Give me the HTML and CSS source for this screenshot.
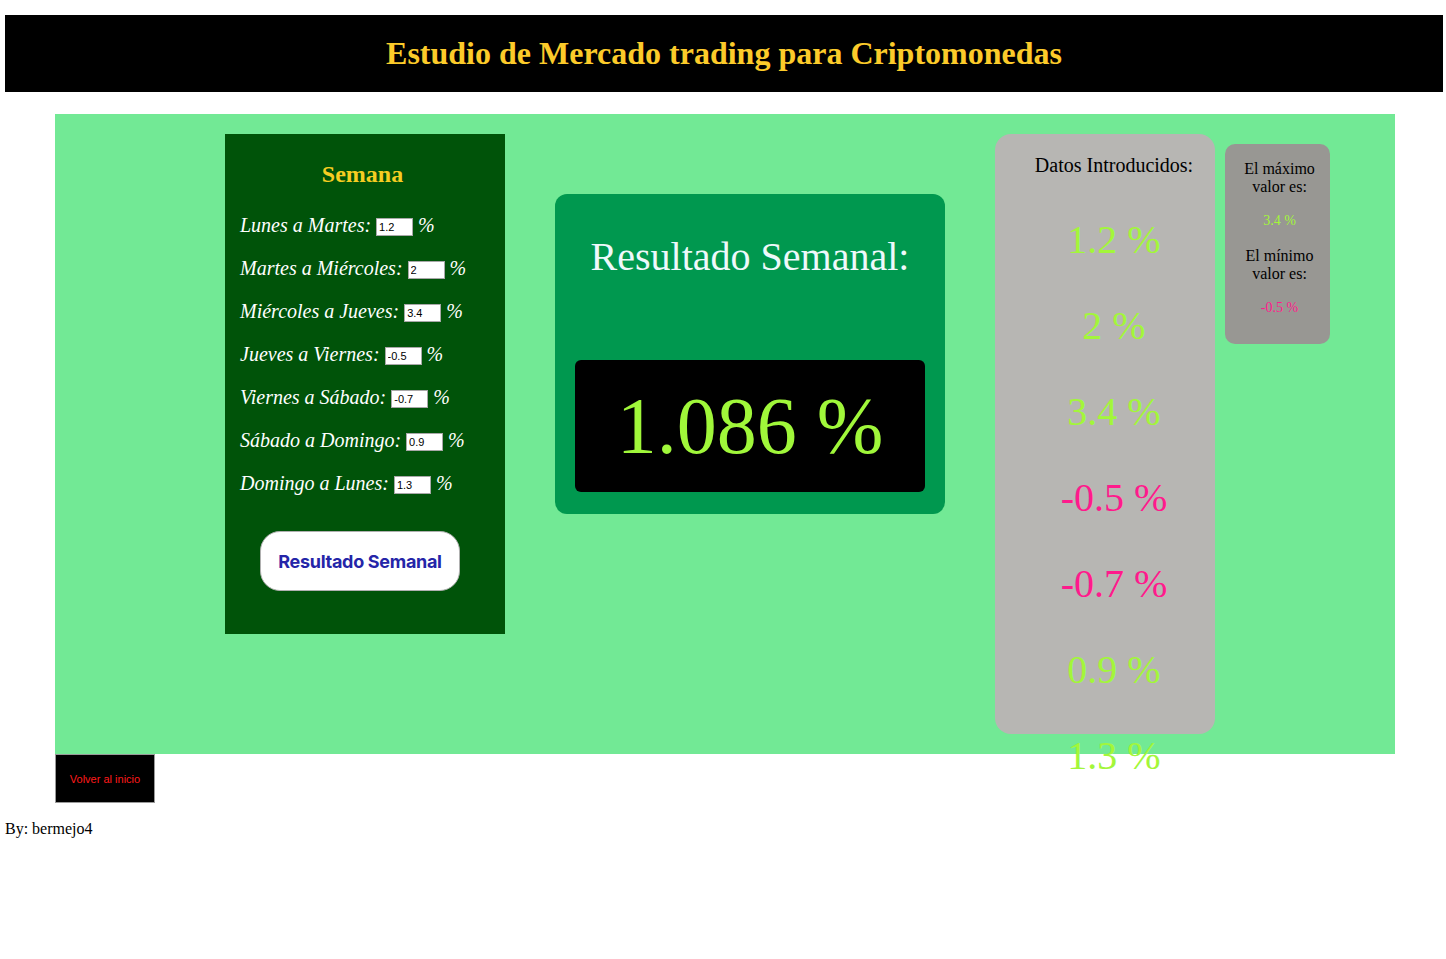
FILE: index.html
```html
<!DOCTYPE html>
<html lang="es">
<head>
<meta charset="utf-8">
<title>Estudio de Mercado</title>
<link rel="stylesheet" href="styles.css">
</head>
<body>
<header class="top">
  <h1 class="top-title">Estudio de Mercado trading para Criptomonedas</h1>
</header>

<main class="stage">
  <section class="week">
    <h2 class="week-title">Semana</h2>
    <div class="row"><span>Lunes a Martes:</span> <input class="num" type="text" value="1.2"> %</div>
    <div class="row"><span>Martes a Miércoles:</span> <input class="num" type="text" value="2"> %</div>
    <div class="row"><span>Miércoles a Jueves:</span> <input class="num" type="text" value="3.4"> %</div>
    <div class="row"><span>Jueves a Viernes:</span> <input class="num" type="text" value="-0.5"> %</div>
    <div class="row"><span>Viernes a Sábado:</span> <input class="num" type="text" value="-0.7"> %</div>
    <div class="row"><span>Sábado a Domingo:</span> <input class="num" type="text" value="0.9"> %</div>
    <div class="row"><span>Domingo a Lunes:</span> <input class="num" type="text" value="1.3"> %</div>
    <div class="btn-wrap"><button class="calc">Resultado Semanal</button></div>
  </section>

  <section class="result">
    <div class="result-title">Resultado Semanal:</div>
    <div class="result-box">1.086 %</div>
  </section>

  <section class="data">
    <div class="data-title">Datos Introducidos:</div>
    <div class="val pos">1.2 %</div>
    <div class="val pos">2 %</div>
    <div class="val pos">3.4 %</div>
    <div class="val neg">-0.5 %</div>
    <div class="val neg">-0.7 %</div>
    <div class="val pos">0.9 %</div>
    <div class="val pos">1.3 %</div>
  </section>

  <section class="extremes">
    <div class="ext-label">El máximo valor es:</div>
    <div class="ext-val pos">3.4 %</div>
    <div class="ext-label">El mínimo valor es:</div>
    <div class="ext-val neg">-0.5 %</div>
  </section>
</main>

<button class="back">Volver al inicio</button>
<p class="author">By: bermejo4</p>
</body>
</html>
```

FILE: styles.css
```css
body {
  margin: 15px 3px 5px 5px;
  font-family: "Liberation Serif", "Times New Roman", serif;
  font-size: 16px;
  color: #000;
  background: #fff;
}

.top {
  background: #000;
  height: 77px;
  display: flex;
  align-items: center;
  justify-content: center;
}

.top-title {
  margin: 0;
  font-size: 32px;
  font-weight: bold;
  color: #fccb2a;
  line-height: 37px;
}

.stage {
  margin: 22px 0 0 50px;
  width: 1340px;
  height: 640px;
  box-sizing: border-box;
  background: #72e995;
  padding: 20px 0 0 170px;
  display: flex;
  align-items: flex-start;
}

.week {
  width: 280px;
  height: 500px;
  box-sizing: border-box;
  background: #005309;
  padding: 24px 20px 0 15px;
  color: #fff;
}

.week-title {
  margin: 0 0 24px 0;
  text-align: center;
  font-size: 24px;
  line-height: 32px;
  color: #f6cd22;
  font-weight: bold;
}

.row {
  font-style: italic;
  font-size: 20px;
  line-height: 23px;
  height: 23px;
  margin-bottom: 20px;
  white-space: nowrap;
}

.num {
  width: 37px;
  height: 18px;
  box-sizing: border-box;
  border: 1px solid #a8a8a8;
  padding: 1px 2px;
  font-family: "Liberation Sans", Arial, sans-serif;
  font-size: 11px;
  color: #000;
  background: #fff;
  vertical-align: 1px;
  font-style: normal;
}

.btn-wrap {
  display: flex;
  justify-content: center;
  padding: 16px 5px 0 0;
}

.calc {
  width: 200px;
  height: 60px;
  border: 1px solid #b0b0b0;
  border-radius: 20px;
  background: #fff;
  color: #2525a8;
  font-family: Inter, "Liberation Sans", sans-serif;
  font-weight: bold;
  font-size: 18px;
  letter-spacing: -0.3px;
}

.result {
  margin: 60px 0 0 50px;
  width: 390px;
  height: 320px;
  box-sizing: border-box;
  background: #00984f;
  border-radius: 12px;
  padding: 40px 20px 22px 20px;
  display: flex;
  flex-direction: column;
}

.result-title {
  font-size: 40px;
  line-height: 46px;
  color: #eef9fb;
  text-align: center;
}

.result-box {
  margin-top: 80px;
  height: 132px;
  background: #000;
  border-radius: 6px;
  color: #a0f73a;
  font-size: 80px;
  line-height: 132px;
  text-align: center;
}

.data {
  margin-left: 50px;
  width: 220px;
  height: 600px;
  box-sizing: border-box;
  background: #b7b6b3;
  border-radius: 16px;
  padding: 20px 0 0 18px;
  text-align: center;
}

.data-title {
  font-size: 20px;
  line-height: 23px;
}

.val {
  font-size: 40px;
  line-height: 46px;
  margin-top: 40px;
}

.pos { color: #a3f63a; }
.neg { color: #ff1a8c; }

.extremes {
  margin: 10px 0 0 10px;
  width: 105px;
  height: 200px;
  box-sizing: border-box;
  background: #989793;
  border-radius: 10px;
  padding: 16px 8px 0 12px;
  text-align: center;
}

.ext-label {
  font-size: 16px;
  line-height: 18px;
}

.ext-val {
  font-size: 14px;
  line-height: 16px;
  margin: 17px 0 18px 0;
}

.back {
  display: block;
  margin-left: 50px;
  width: 100px;
  height: 49px;
  background: #000;
  border: 1px solid #9a9a9a;
  color: #ff1a1a;
  font-family: "Liberation Sans", Arial, sans-serif;
  font-size: 11px;
  padding: 0;
}

.author {
  margin: 17px 0 0 0;
  line-height: 18px;
}
```
